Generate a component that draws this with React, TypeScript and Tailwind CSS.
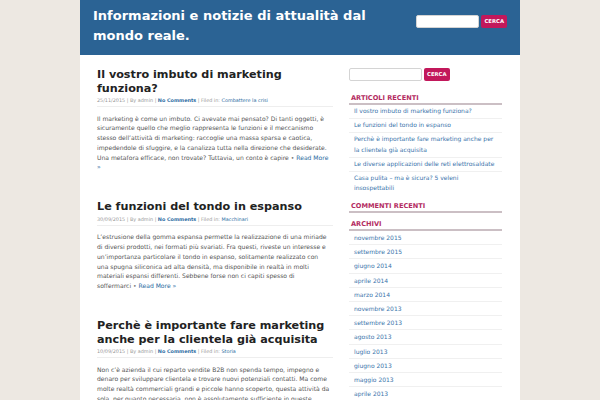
import React from "react";

type Post = {
  title: string[];
  date: string;
  category: string;
  lines: React.ReactNode[];
};

const more = (
  <>
    {" "}
    <span className="text-[#777]">•</span>{" "}
    <a className="text-[#2d6ca2]">Read More »</a>
  </>
);

const posts: Post[] = [
  {
    title: ["Il vostro imbuto di marketing", "funziona?"],
    date: "25/11/2015",
    category: "Combattere la crisi",
    lines: [
      "Il marketing è come un imbuto. Ci avevate mai pensato? Di tanti oggetti, è",
      "sicuramente quello che meglio rappresenta le funzioni e il meccanismo",
      "stesso dell’attività di marketing: raccoglie una massa sparsa e caotica,",
      "impedendole di sfuggire, e la canalizza tutta nella direzione che desiderate.",
      <>
        Una metafora efficace, non trovate? Tuttavia, un conto è capire{" "}
        <span className="text-[#777]">•</span> <a className="text-[#2d6ca2]">Read More</a>
      </>,
      <a className="text-[#2d6ca2]">»</a>,
    ],
  },
  {
    title: ["Le funzioni del tondo in espanso"],
    date: "30/09/2015",
    category: "Macchinari",
    lines: [
      "L’estrusione della gomma espansa permette la realizzazione di una miriade",
      "di diversi prodotti, nei formati più svariati. Fra questi, riveste un interesse e",
      "un’importanza particolare il tondo in espanso, solitamente realizzato con",
      "una spugna siliconica ad alta densità, ma disponibile in realtà in molti",
      "materiali espansi differenti. Sebbene forse non ci capiti spesso di",
      <>soffermarci{more}</>,
    ],
  },
  {
    title: ["Perchè è importante fare marketing", "anche per la clientela già acquisita"],
    date: "10/09/2015",
    category: "Storia",
    lines: [
      "Non c’è azienda il cui reparto vendite B2B non spenda tempo, impegno e",
      "denaro per sviluppare clientela e trovare nuovi potenziali contatti. Ma come",
      "molte realtà commerciali grandi e piccole hanno scoperto, questa attività da",
      "sola, per quanto necessaria, non è assolutamente sufficiente in queste",
      "circostanze, perché i clienti acquisiti vanno seguiti nel tempo.",
    ],
  },
];

const recent: string[][] = [
  ["Il vostro imbuto di marketing funziona?"],
  ["Le funzioni del tondo in espanso"],
  ["Perchè è importante fare marketing anche per", "la clientela già acquisita"],
  ["Le diverse applicazioni delle reti elettrosaldate"],
  ["Casa pulita – ma è sicura? 5 veleni", "insospettabili"],
];

const archives = [
  "novembre 2015",
  "settembre 2015",
  "giugno 2014",
  "aprile 2014",
  "marzo 2014",
  "novembre 2013",
  "settembre 2013",
  "agosto 2013",
  "luglio 2013",
  "giugno 2013",
  "maggio 2013",
  "aprile 2013",
  "marzo 2013",
];

function SearchForm({ inputWidth }: { inputWidth: string }) {
  return (
    <form className="flex items-center gap-[2px]">
      <input
        className={`h-[13px] ${inputWidth} rounded-[2px] border border-[#d4d4d4] bg-white`}
      />
      <button
        type="button"
        className="h-[13px] rounded-[2px] bg-[#c2185b] px-[3px] text-[5.3px] font-bold leading-[13px] text-white"
      >
        CERCA
      </button>
    </form>
  );
}

function WidgetTitle({ children }: { children: React.ReactNode }) {
  return (
    <h3 className="border-b-2 border-[#cbbfc4] pt-[6px] pl-[2px] text-[6.6px] font-bold leading-[10px] text-[#b32a5f]">
      {children}
    </h3>
  );
}

function PostItem({ post }: { post: Post }) {
  return (
    <article className="mb-[28px]">
      <h2 className="whitespace-nowrap text-[11.2px] font-bold leading-[13.5px] text-[#222]">
        {post.title.map((t, i) => (
          <div key={i}>{t}</div>
        ))}
      </h2>
      <p className="mt-[2px] border-b border-[#eeeeee] pb-[2px] text-[4.9px] leading-[7px] text-[#999]">
        {post.date} | By admin | <a className="font-bold text-[#2d6ca2]">No Comments</a> | Filed
        in: <a className="text-[#2d6ca2]">{post.category}</a>
      </p>
      <div className="mt-[6.5px] text-[6.05px] leading-[9.8px] text-[#555]">
        {post.lines.map((l, i) => (
          <div key={i} className="whitespace-nowrap">
            {l}
          </div>
        ))}
      </div>
    </article>
  );
}

export default function App() {
  return (
    <div className="h-[400px] overflow-hidden bg-[#ede8e2] font-['DejaVu_Sans',sans-serif]">
      <div className="mx-[80px] min-h-[400px] w-[440px] bg-white">
        <header className="flex h-[55px] items-start justify-between bg-[#2b6394] pl-[13px] pr-[13px] pt-[6px]">
          <h1 className="text-[13px] font-bold leading-[20px] text-white">
            Informazioni e notizie di attualità dal
            <br />
            mondo reale.
          </h1>
          <div className="mt-[9px]">
            <SearchForm inputWidth="w-[63px]" />
          </div>
        </header>

        <div className="flex px-[17px]">
          <main className="w-[236px] pt-[13px]">
            {posts.map((p) => (
              <PostItem key={p.date} post={p} />
            ))}
          </main>

          <aside className="ml-[16px] w-[153px] pt-[13px]">
            <SearchForm inputWidth="w-[73px]" />

            <div className="mt-[6px]">
              <WidgetTitle>ARTICOLI RECENTI</WidgetTitle>
              <ul className="text-[6px] leading-[10.5px] text-[#3a74ab]">
                {recent.map((r, i) => (
                  <li
                    key={i}
                    className="border-b border-[#f0f0f0] py-[1.25px] pl-[5px] last:border-b-0"
                  >
                    {r.map((line, j) => (
                      <div key={j} className="whitespace-nowrap">
                        {line}
                      </div>
                    ))}
                  </li>
                ))}
              </ul>
            </div>

            <WidgetTitle>COMMENTI RECENTI</WidgetTitle>

            <WidgetTitle>ARCHIVI</WidgetTitle>
            <ul className="text-[6px] leading-[9.2px] text-[#3a74ab]">
              {archives.map((a) => (
                <li key={a} className="border-b border-[#f0f0f0] py-[2px] pl-[5px]">
                  {a}
                </li>
              ))}
            </ul>
          </aside>
        </div>
      </div>
    </div>
  );
}
